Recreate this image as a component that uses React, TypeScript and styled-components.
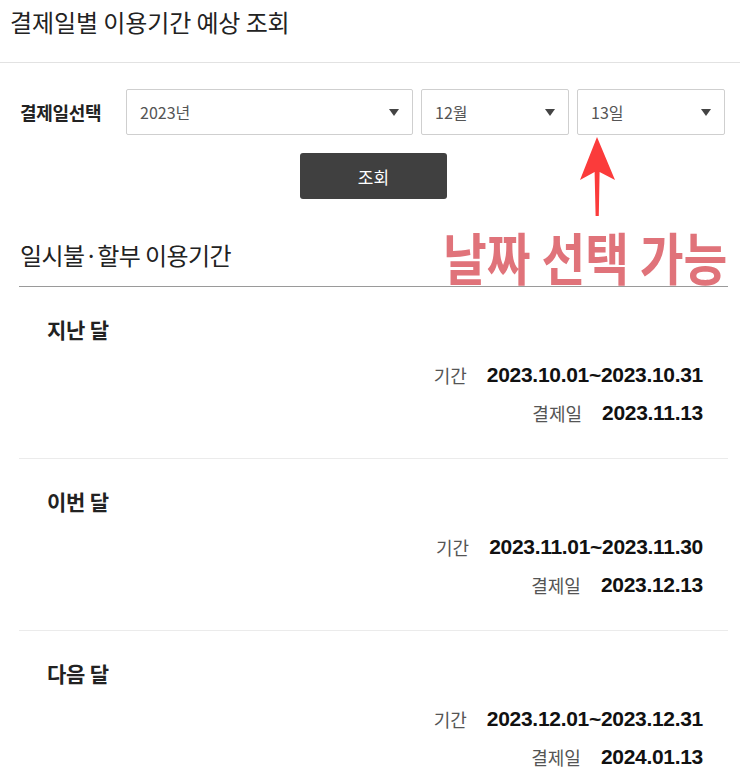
import React from "react";
import styled, { createGlobalStyle } from "styled-components";

const Global = createGlobalStyle`
  html, body { margin: 0; padding: 0; background: #fff; }
  body { font-family: "Noto Sans CJK KR", "Noto Sans", sans-serif; color: #222; }
  * { box-sizing: border-box; }
`;

const Page = styled.div`
  position: relative;
  width: 740px;
  min-height: 770px;
  overflow: hidden;
`;

const Header = styled.header`
  height: 63px;
  padding: 6px 0 0 10px;
  border-bottom: 1px solid #e2e2e2;
`;

const Title = styled.h1`
  margin: 0;
  font-size: 24px;
  font-weight: 400;
  line-height: 32px;
  color: #222;
  letter-spacing: -0.1px;
`;

const Content = styled.div`
  padding: 26px 12px 0 19px;
`;

const FormRow = styled.div`
  display: flex;
  align-items: center;
  height: 46px;
`;

const FormLabel = styled.div`
  width: 107px;
  padding-left: 1px;
  font-size: 18px;
  font-weight: 700;
  color: #222;
  letter-spacing: -0.3px;
`;

const Selects = styled.div`
  display: flex;
  gap: 8px;
`;

const Select = styled.div<{ $w: number }>`
  width: ${(p) => p.$w}px;
  height: 46px;
  border: 1px solid #cfcfcf;
  border-radius: 2px;
  display: flex;
  align-items: center;
  justify-content: space-between;
  padding: 0 13px 0 13px;
  font-size: 16px;
  color: #555;
  background: #fff;
`;

const Caret = styled.span`
  width: 0;
  height: 0;
  border-left: 5px solid transparent;
  border-right: 5px solid transparent;
  border-top: 7px solid #444;
`;

const ButtonRow = styled.div`
  display: flex;
  justify-content: center;
  margin-top: 18px;
`;

const Button = styled.button`
  width: 147px;
  height: 46px;
  border: none;
  border-radius: 3px;
  background: #404040;
  color: #fff;
  font-family: inherit;
  font-size: 17px;
`;

const SectionHead = styled.h2`
  margin: 38px 0 0;
  padding: 0 0 13px 1px;
  border-bottom: 1px solid #9a9a9a;
  font-size: 24px;
  font-weight: 400;
  line-height: 36px;
  color: #222;
  letter-spacing: -0.6px;
`;

const Item = styled.div<{ $last?: boolean }>`
  padding: 28px 25px 31px 28px;
  border-bottom: ${(p) => (p.$last ? "none" : "1px solid #ebebeb")};
`;

const ItemTitle = styled.h3`
  margin: 0;
  font-size: 21px;
  font-weight: 700;
  line-height: 28px;
  color: #222;
  letter-spacing: -0.2px;
`;

const Rows = styled.div`
  margin-top: 18px;
  display: flex;
  flex-direction: column;
  align-items: flex-end;
  gap: 10px;
`;

const Row = styled.div`
  display: flex;
  align-items: center;
  gap: 20px;
  height: 28px;
`;

const RowLabel = styled.span`
  font-size: 18px;
  color: #555;
`;

const RowValue = styled.span`
  font-family: "Liberation Sans", Arial, sans-serif;
  font-size: 21px;
  font-weight: 700;
  color: #111;
  letter-spacing: -0.3px;
`;

const Annotation = styled.div`
  position: absolute;
  left: 443px;
  top: 220px;
  font-size: 56px;
  font-weight: 700;
  line-height: 72px;
  color: #e0737a;
  white-space: nowrap;
  transform: scaleX(0.85);
  transform-origin: left center;
`;

const ArrowSvg = styled.svg`
  position: absolute;
  left: 570px;
  top: 130px;
`;

const items = [
  { title: "지난 달", period: "2023.10.01~2023.10.31", pay: "2023.11.13" },
  { title: "이번 달", period: "2023.11.01~2023.11.30", pay: "2023.12.13" },
  { title: "다음 달", period: "2023.12.01~2023.12.31", pay: "2024.01.13" },
];

export default function App() {
  return (
    <Page>
      <Global />
      <Header>
        <Title>결제일별 이용기간 예상 조회</Title>
      </Header>
      <Content>
        <FormRow>
          <FormLabel>결제일선택</FormLabel>
          <Selects>
            <Select $w={287}>
              <span>2023년</span>
              <Caret />
            </Select>
            <Select $w={148}>
              <span>12월</span>
              <Caret />
            </Select>
            <Select $w={148}>
              <span>13일</span>
              <Caret />
            </Select>
          </Selects>
        </FormRow>
        <ButtonRow>
          <Button>조회</Button>
        </ButtonRow>
        <SectionHead>일시불·할부 이용기간</SectionHead>
        {items.map((it, i) => (
          <Item key={it.title} $last={i === items.length - 1}>
            <ItemTitle>{it.title}</ItemTitle>
            <Rows>
              <Row>
                <RowLabel>기간</RowLabel>
                <RowValue>{it.period}</RowValue>
              </Row>
              <Row>
                <RowLabel>결제일</RowLabel>
                <RowValue>{it.pay}</RowValue>
              </Row>
            </Rows>
          </Item>
        ))}
      </Content>
      <ArrowSvg width="60" height="95" viewBox="570 130 60 95">
        <path
          d="M597 137 L615 180 L599.6 172 L598.8 216 L595.6 216 L594.6 172 L580 180 Z"
          fill="#fb3b3b"
        />
      </ArrowSvg>
      <Annotation>날짜 선택 가능</Annotation>
    </Page>
  );
}
